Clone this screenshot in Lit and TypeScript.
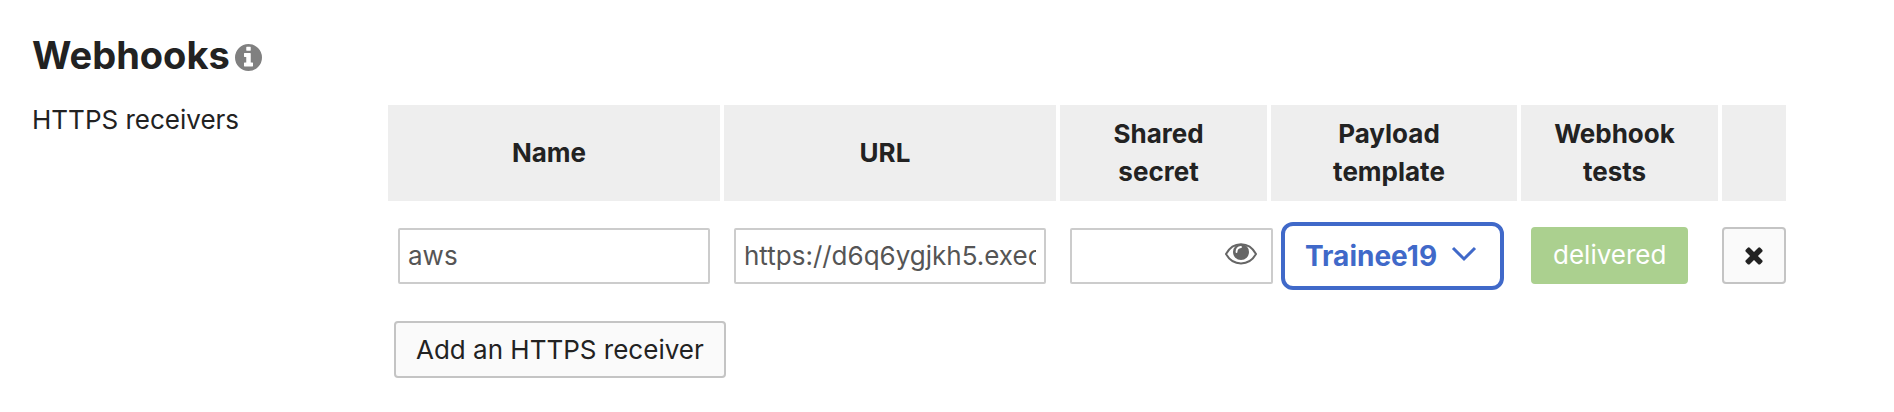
import { LitElement, html, css } from "lit";
import { customElement, state } from "lit/decorators.js";

@customElement("app-root")
export class AppRoot extends LitElement {
  static styles = css`
    :host {
      display: block;
      min-height: 100vh;
      box-sizing: border-box;
      padding: 32px 104px 34px 32px;
      background: #fff;
      color: #222;
      font: 400 26px/38px Inter, "Liberation Sans", sans-serif;
    }
    * { box-sizing: border-box; }
    svg { display: block; fill: currentColor; flex: none; }
    button, input, select { font: inherit; margin: 0; }
    .title { display: flex; align-items: center; gap: 5px; margin-bottom: 23px; }
    h2 { margin: 0; font-size: 38px; line-height: 46px; font-weight: 700; }
    .info { color: #808080; padding-top: 4px; }
    .section { display: grid; grid-template-columns: 352px minmax(0, 1fr); }
    .body { padding-top: 4px; }
    table { width: 100%; table-layout: fixed; border-collapse: separate; border-spacing: 4px 0; }
    .secret-col { width: 207px; }
    .template-col { width: 246px; }
    .tests-col { width: 197px; }
    .remove-col { width: 64px; }
    th { background: #eee; padding: 10px 40px 10px 30px; font-weight: 700; }
    th.remove { padding: 0; }
    td { height: 110px; padding: 0 10px; vertical-align: middle; }
    td.secret { padding-right: 0; }
    td.tests { padding-bottom: 2px; }
    td.remove { padding: 0 0 2px; }
    .field {
      display: block;
      width: 100%;
      height: 56px;
      padding: 0 8px 2px;
      border: 2px solid #ccc;
      border-radius: 2px;
      background: #fff;
      color: #555;
    }
    .reveal-field { display: flex; align-items: center; width: 203px; padding: 0 14px 0 8px; }
    .reveal-field input { flex: 1; min-width: 0; border: 0; padding: 0; outline: 0; background: none; color: inherit; }
    .eye { border: 0; padding: 0 0 4px; background: none; color: #666; cursor: pointer; }
    .picker { position: relative; width: 223px; color: #4069c9; }
    select {
      display: block;
      width: 100%;
      height: 68px;
      padding: 0 50px 0 20px;
      border: 4px solid #4069c9;
      border-radius: 12px;
      appearance: none;
      background: #fff;
      color: inherit;
      font-size: 28px;
      font-weight: 700;
    }
    .chevron { position: absolute; right: 27px; top: 24px; pointer-events: none; }
    .btn {
      display: flex;
      align-items: center;
      justify-content: center;
      height: 57px;
      padding: 0 20px;
      border: 2px solid #c4c4c4;
      border-radius: 4px;
      background: #fafafa;
      color: #222;
      white-space: nowrap;
      cursor: pointer;
    }
    .delivered { border-color: #abd08f; background: #abd08f; color: #fff; }
    .square { width: 100%; padding: 0; }
    .add { margin: 10px 10px 0; }
  `;

  @state() private reveal = false;

  render() {
    return html`
      <div class="title">
        <h2>Webhooks</h2>
        <span class="info">
          <svg width="27" height="27" viewBox="128 128 1536 1536" aria-hidden="true">
            <path fill-rule="evenodd" d="M896 128a768 768 0 1 1 0 1536a768 768 0 1 1 0-1536zM1152 1376v-160q0-14-9-23t-23-9h-96v-512q0-14-9-23t-23-9h-320q-14 0-23 9t-9 23v160q0 14 9 23t23 9h96v320h-96q-14 0-23 9t-9 23v160q0 14 9 23t23 9h448q14 0 23-9t9-23zM1024 480v-160q0-14-9-23t-23-9h-192q-14 0-23 9t-9 23v160q0 14 9 23t23 9h192q14 0 23-9t9-23z"></path>
          </svg>
        </span>
      </div>
      <div class="section">
        <div id="receivers">HTTPS receivers</div>
        <div class="body">
          <table aria-labelledby="receivers">
            <colgroup>
              <col /><col /><col class="secret-col" /><col class="template-col" /><col class="tests-col" /><col class="remove-col" />
            </colgroup>
            <thead>
              <tr>
                <th id="name">Name</th>
                <th id="url">URL</th>
                <th id="secret">Shared secret</th>
                <th id="template">Payload template</th>
                <th>Webhook tests</th>
                <th class="remove"></th>
              </tr>
            </thead>
            <tbody>
              <tr>
                <td><input class="field" aria-labelledby="name" .value=${"aws"} /></td>
                <td><input class="field" aria-labelledby="url" .value=${"https://d6q6ygjkh5.execute"} /></td>
                <td class="secret">
                  <div class="field reveal-field">
                    <input type=${this.reveal ? "text" : "password"} aria-labelledby="secret" />
                    <button class="eye" type="button" aria-labelledby="secret" @click=${() => (this.reveal = !this.reveal)}>
                      <svg width="32" height="22" viewBox="0 0 32 22" aria-hidden="true">
                        <path d="M1 11C8-2 24-2 31 11C24 23.500 8 23.500 1 11Z" fill="none" stroke="currentColor" stroke-width="2"></path>
                        <circle cx="16" cy="9" r="8"></circle>
                        <path d="M11.500 9q0-4.500 4.500-5" fill="none" stroke="#fff" stroke-width="1.800" stroke-linecap="round"></path>
                      </svg>
                    </button>
                  </div>
                </td>
                <td>
                  <div class="picker">
                    <select aria-labelledby="template"><option>Trainee19</option></select>
                    <svg class="chevron" width="26" height="16" viewBox="0 0 26 16" aria-hidden="true">
                      <path d="M2 2L13 13L24 2" fill="none" stroke="currentColor" stroke-width="3"></path>
                    </svg>
                  </div>
                </td>
                <td class="tests"><button class="btn delivered" type="button">delivered</button></td>
                <td class="remove">
                  <button class="btn square" type="button" aria-label="Remove">
                    <svg width="26" height="26" viewBox="0 0 1792 1792" aria-hidden="true">
                      <path d="M1490 1322q0 40-28 68l-136 136q-28 28-68 28t-68-28l-294-294-294 294q-28 28-68 28t-68-28l-136-136q-28-28-28-68t28-68l294-294-294-294q-28-28-28-68t28-68l136-136q28-28 68-28t68 28l294 294 294-294q28-28 68-28t68 28l136 136q28 28 28 68t-28 68l-294 294 294 294q28 28 28 68z"></path>
                    </svg>
                  </button>
                </td>
              </tr>
            </tbody>
          </table>
          <button class="btn add" type="button">Add an HTTPS receiver</button>
        </div>
      </div>
    `;
  }
}
